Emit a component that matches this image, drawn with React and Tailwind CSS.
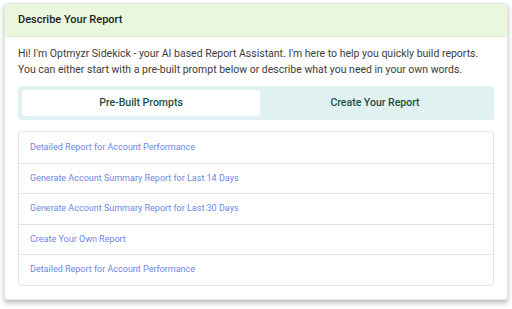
import React, { useState } from "react";

const PROMPTS = [
  "Detailed Report for Account Performance",
  "Generate Account Summary Report for Last 14 Days",
  "Generate Account Summary Report for Last 30 Days",
  "Create Your Own Report",
  "Detailed Report for Account Performance"
];

function App() {
  const [tab, setTab] = useState("prebuilt");

  return (
    <div
      className="w-[512px] h-[309px] bg-white pt-[3px] px-[4px]"
      style={{ fontFamily: "Roboto, 'Liberation Sans', sans-serif" }}
    >
      <div className="w-[504px] h-[297px] bg-white rounded-[3px] border border-[#e6e6e6] shadow-[0_3px_5px_rgba(0,0,0,0.25)] overflow-hidden">
        <div className="h-[33px] bg-[#ebf7dd] border-b border-[#e3ecd8] flex items-center px-[13px]">
          <span className="text-[11px] font-medium text-[#222]">Describe Your Report</span>
        </div>

        <div className="px-[13px] pt-[9px]">
          <p className="text-[10.5px] leading-[16px] text-[#3c3c3c]">
            Hi! I'm Optmyzr Sidekick - your AI based Report Assistant. I'm here to help you quickly build reports.
            You can either start with a pre-built prompt below or describe what you need in your own words.
          </p>

          <div className="mt-[8px] h-[34px] bg-[#dff1f1] rounded-[4px] p-[4px] flex">
            <button
              onClick={() => setTab("prebuilt")}
              className={`w-[238px] rounded-[3px] text-[10.5px] font-medium text-[#1d4d45] ${
                tab === "prebuilt" ? "bg-white" : ""
              }`}
            >
              Pre-Built Prompts
            </button>
            <button
              onClick={() => setTab("create")}
              className={`flex-1 rounded-[3px] text-[10.5px] font-medium text-[#1d4d45] ${
                tab === "create" ? "bg-white" : ""
              }`}
            >
              Create Your Report
            </button>
          </div>

          <div className="mt-[11px] border border-[#e3e3e3] rounded-[4px]">
            {PROMPTS.map((p, i) => (
              <div
                key={i}
                className={`h-[30.6px] flex items-center px-[11px] text-[9px] text-[#6f86e8] ${
                  i > 0 ? "border-t border-[#e3e3e3]" : "pt-[1px]"
                }`}
              >
                {p}
              </div>
            ))}
          </div>
        </div>
      </div>
    </div>
  );
}

export default App;
